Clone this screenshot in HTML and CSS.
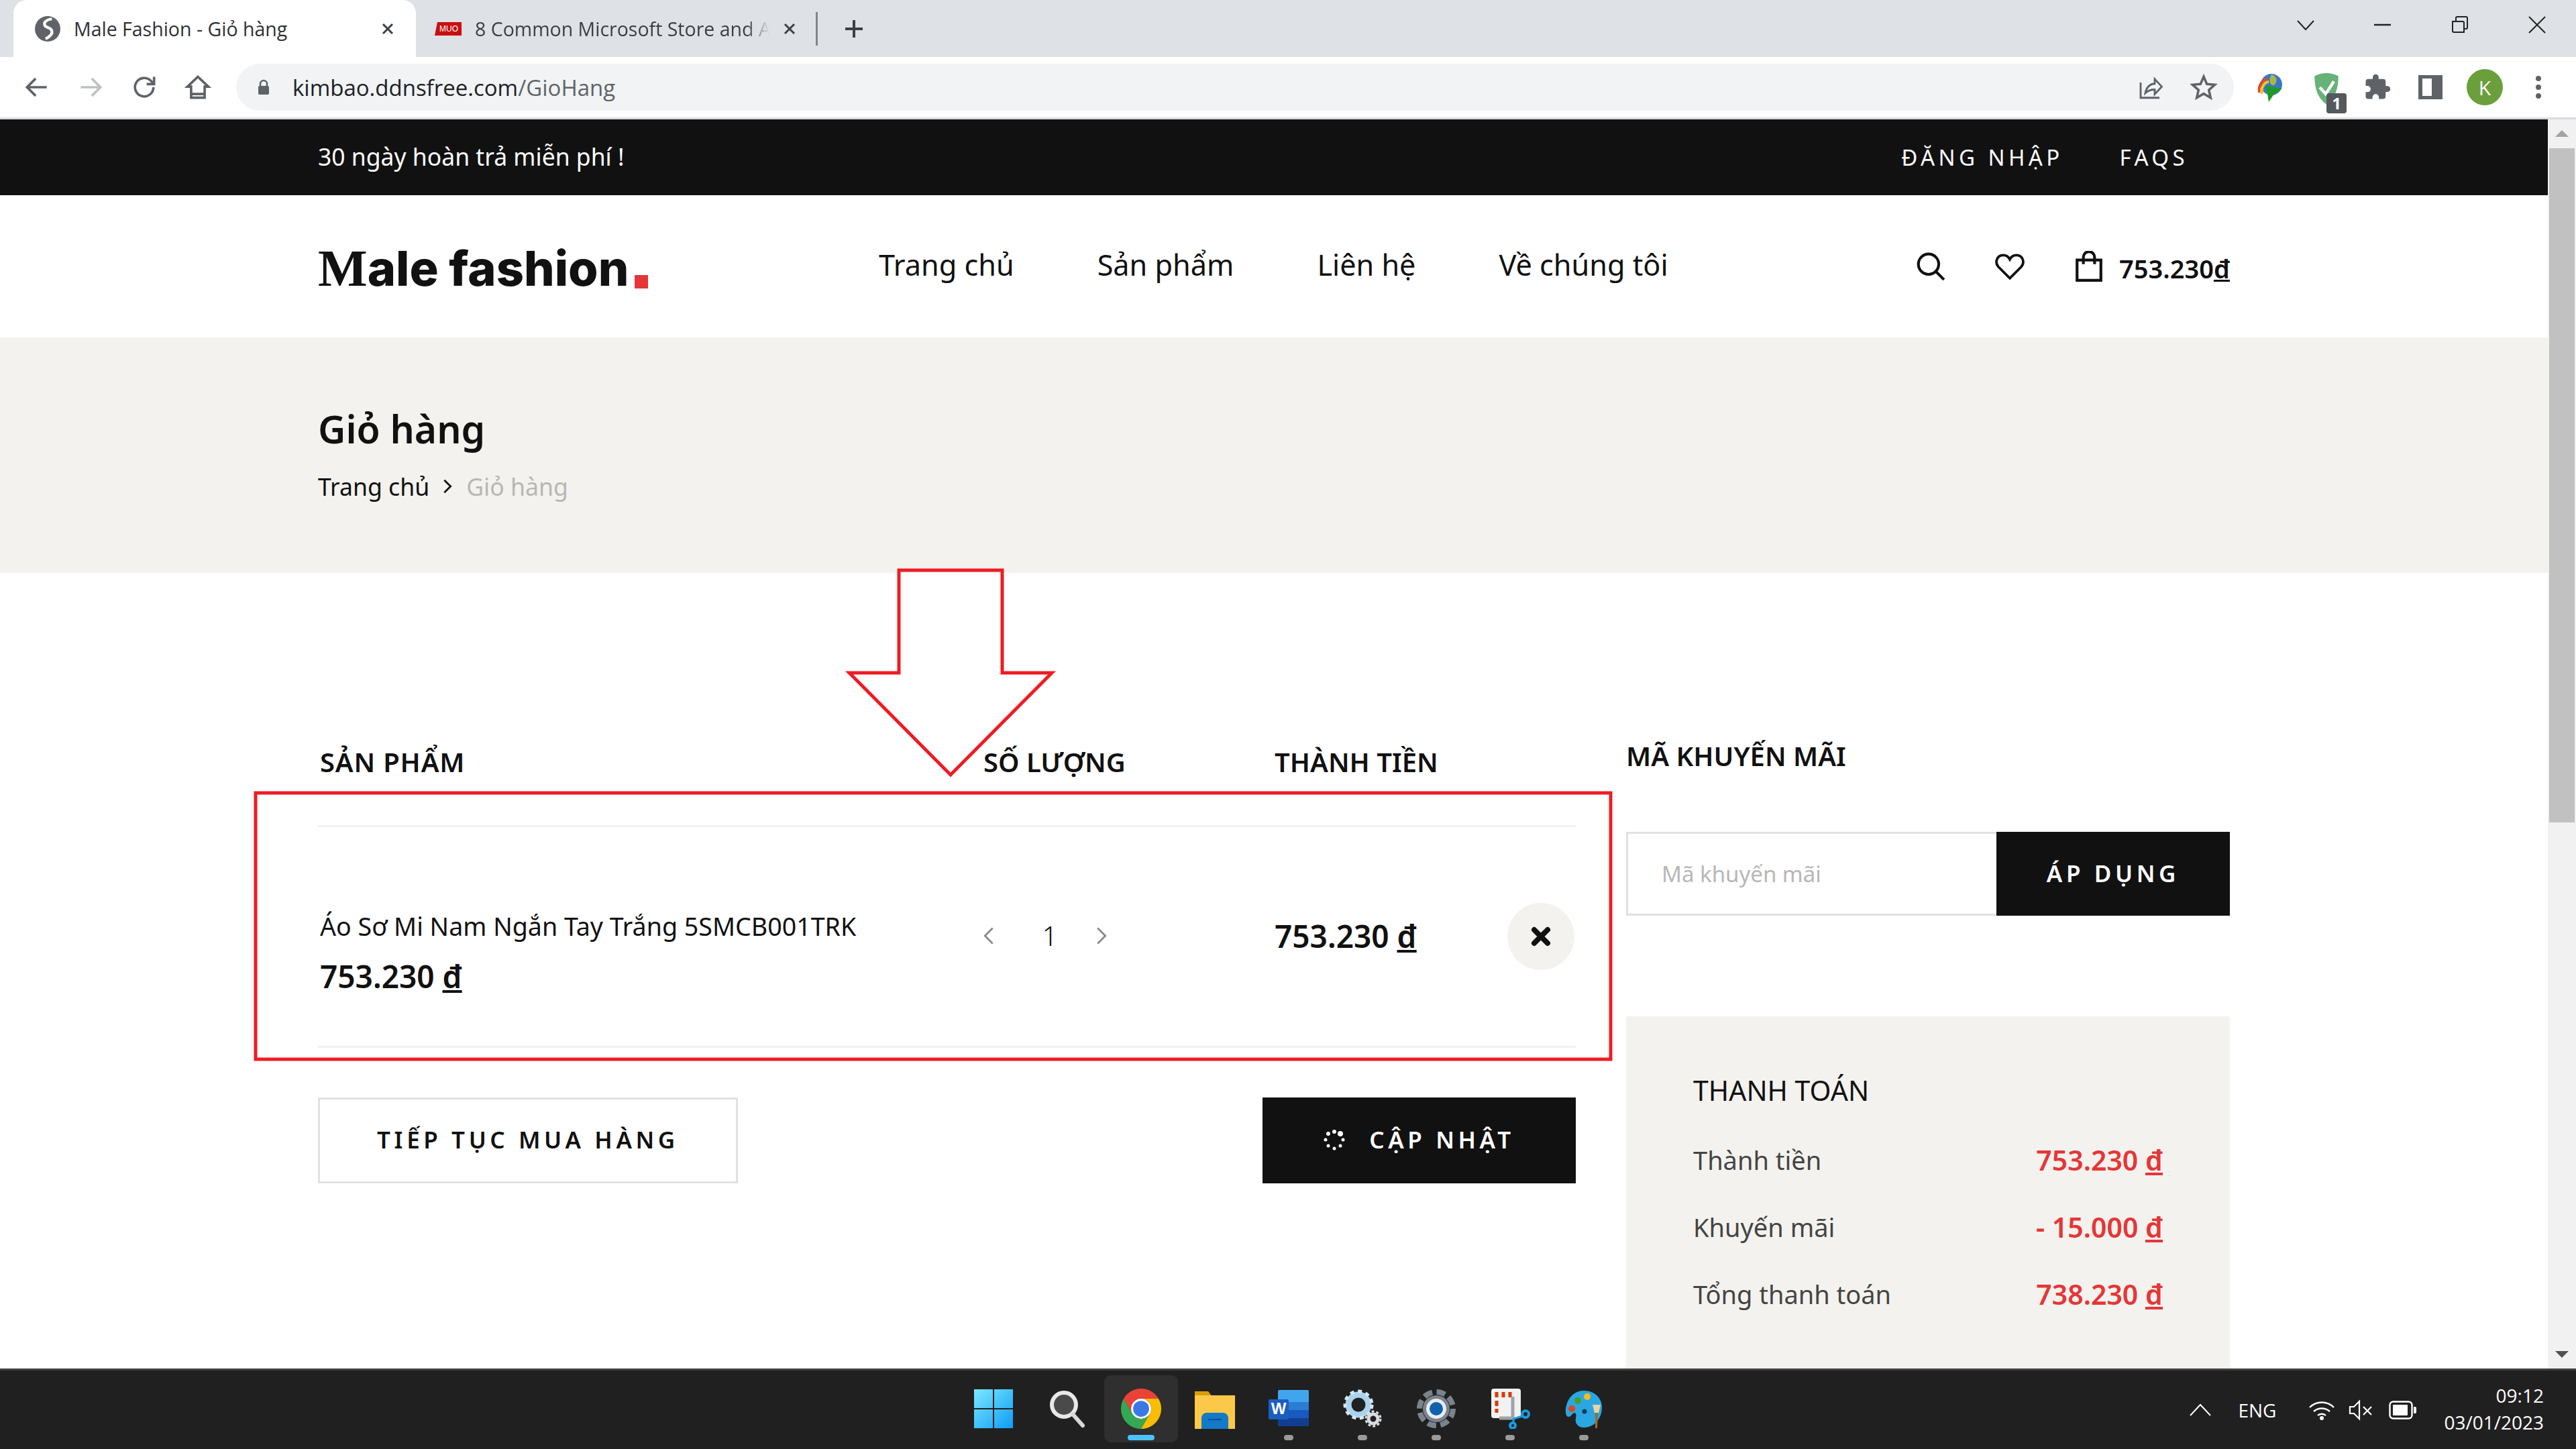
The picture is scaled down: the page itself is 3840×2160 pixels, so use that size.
FILE: index.html
```html
<!DOCTYPE html>
<html lang="vi">
<head>
    <meta charset="UTF-8">
    <title>Male Fashion - Giỏ hàng</title>
    <link rel="stylesheet" href="styles.css">
</head>
<body>
    <!-- Browser tabs -->
    <div class="tabstrip">
        <div class="tab tab-active">
            <svg class="favicon" viewBox="0 0 36 36"><circle cx="18" cy="18" r="18" fill="#5f6368"/><path d="M24 4c-8 1-12 5-10 9 2 4 9 3 10 8 1 4-3 8-9 11" fill="none" stroke="#fff" stroke-width="4"/></svg>
            <span class="tab-title">Male Fashion - Giỏ hàng</span>
            <svg class="tab-close" viewBox="0 0 20 20"><path d="M3 3l14 14M17 3L3 17" stroke="#3c4043" stroke-width="3"/></svg>
        </div>
        <div class="tab">
            <svg class="favicon favicon-muo" viewBox="0 0 40 20"><path d="M4 0h36v20H0z" fill="#c80f0f"/><text x="21" y="14" class="muo-text">MUO</text></svg>
            <span class="tab-title tab-title-fade">8 Common Microsoft Store and A</span>
            <svg class="tab-close" viewBox="0 0 20 20"><path d="M3 3l14 14M17 3L3 17" stroke="#3c4043" stroke-width="3"/></svg>
        </div>
        <span class="tab-sep"></span>
        <svg class="new-tab" viewBox="0 0 30 30"><path d="M15 2v26M2 15h26" stroke="#3c4043" stroke-width="4"/></svg>
        <div class="win-controls">
            <svg viewBox="0 0 26 26" class="win-chevron"><path d="M1 7l12 13L25 7" fill="none" stroke="#222" stroke-width="2"/></svg>
            <svg viewBox="0 0 26 26" class="win-min"><path d="M0 13h25" stroke="#222" stroke-width="2.5"/></svg>
            <svg viewBox="0 0 26 26" class="win-max"><path d="M2 8h15a2 2 0 0 1 2 2v14H4a2 2 0 0 1-2-2zM7 7V3a2 2 0 0 1 2-2h13a2 2 0 0 1 2 2v14a2 2 0 0 1-2 2h-3" fill="none" stroke="#222" stroke-width="2"/></svg>
            <svg viewBox="0 0 26 26" class="win-close"><path d="M1 1l24 24M25 1L1 25" stroke="#222" stroke-width="2"/></svg>
        </div>
    </div>

    <!-- Browser toolbar -->
    <div class="toolbar">
        <div class="nav-btns">
            <svg viewBox="0 0 24 24"><path d="M20 12H4.500M11 5l-7 7 7 7" fill="none" stroke="#5f6368" stroke-width="2"/></svg>
            <svg viewBox="0 0 24 24"><path d="M4 12h15.500M13 5l7 7-7 7" fill="none" stroke="#bdc1c6" stroke-width="2"/></svg>
            <svg viewBox="0 0 24 24"><path d="M19.500 12a7.500 7.500 0 1 1-2.200-5.300L20 9.400M20 3.500v6h-6" fill="none" stroke="#5f6368" stroke-width="2"/></svg>
            <svg viewBox="0 0 24 24"><path d="M12 3.500L3.500 11.500H6.500V20.500H17.500V11.500H20.500zM6.500 17.500h11" fill="none" stroke="#5f6368" stroke-width="2"/></svg>
        </div>
        <div class="omnibox">
            <svg class="lock" viewBox="0 0 20 24"><path d="M5 10V7a5 5 0 0 1 10 0v3" fill="none" stroke="#5f6368" stroke-width="2.500"/><rect x="2" y="10" width="16" height="13" rx="2" fill="#5f6368"/></svg>
            <span class="url">kimbao.ddnsfree.com<span class="url-path">/GioHang</span></span>
            <svg class="omni-icon omni-share" viewBox="0 0 24 24"><path d="M4 8v13h16M8 17c1-6 5-8 8-8V5l6 6.500-6 6.500v-4c-3 0-6 1-8 3z" fill="none" stroke="#5f6368" stroke-width="1.600"/></svg>
            <svg class="omni-icon omni-star" viewBox="0 0 24 24"><path d="M12 3l2.700 6.300 6.800.600-5.100 4.500 1.500 6.600L12 17.500 6.100 21l1.500-6.600-5.100-4.500 6.800-.600z" fill="none" stroke="#5f6368" stroke-width="2"/></svg>
        </div>
        <div class="extensions">
            <svg class="ext-idm" viewBox="0 0 40 44"><circle cx="22" cy="18" r="16" fill="#3b78c4"/><path d="M22 3c8 2 10 10 4 16-6 1-9-7-4-16z" fill="#a8b94a"/><path d="M4 30C2 18 10 10 16 10" fill="none" stroke="#e24a2a" stroke-width="4"/><path d="M8 32C6 22 12 14 18 14" fill="none" stroke="#f2c522" stroke-width="4"/><path d="M14 20l24 4-12 8-8 12z" fill="#1e9b1e"/></svg>
            <div class="ext-guard">
                <svg viewBox="0 0 36 44"><path d="M18 1c7 0 12 2 16 4 0 18-5 30-16 38C7 35 2 23 2 5c4-2 9-4 16-4z" fill="#67b279"/><path d="M9 20l8 9 11-17" fill="none" stroke="#fff" stroke-width="4"/></svg>
                <span class="guard-badge">1</span>
            </div>
            <svg class="ext-puzzle" viewBox="0 0 24 24"><path d="M20.500 11H19V7c0-1.100-.9-2-2-2h-4V3.500C13 2.120 11.880 1 10.500 1S8 2.120 8 3.500V5H4c-1.100 0-1.990.9-1.990 2v3.800H3.500c1.490 0 2.700 1.210 2.700 2.700s-1.210 2.700-2.700 2.700H2V20c0 1.100.9 2 2 2h3.800v-1.500c0-1.490 1.210-2.700 2.700-2.700 1.490 0 2.700 1.210 2.700 2.700V22H17c1.100 0 2-.9 2-2v-4h1.500c1.380 0 2.500-1.120 2.500-2.500S21.880 11 20.500 11z" fill="#5f6368"/></svg>
            <span class="ext-panel"></span>
            <span class="avatar">K</span>
            <svg class="ext-menu" viewBox="0 0 10 36"><circle cx="5" cy="5" r="4" fill="#5f6368"/><circle cx="5" cy="18" r="4" fill="#5f6368"/><circle cx="5" cy="31" r="4" fill="#5f6368"/></svg>
        </div>
    </div>

    <div class="viewport">
        <div class="page">
            <div class="topbar">
                <div class="container topbar-inner">
                    <span class="topbar-note">30 ngày hoàn trả miễn phí !</span>
                    <div class="topbar-links">
                        <a href="#">ĐĂNG NHẬP</a>
                        <a href="#">FAQS</a>
                    </div>
                </div>
            </div>

            <header class="site-header">
                <div class="container site-header-inner">
                    <a href="#" class="logo"><span class="logo-m">M</span>ale fashion<span class="logo-dot"></span></a>
                    <nav class="main-nav">
                        <a href="#">Trang chủ</a>
                        <a href="#">Sản phẩm</a>
                        <a href="#">Liên hệ</a>
                        <a href="#">Về chúng tôi</a>
                    </nav>
                    <div class="header-actions">
                        <svg class="header-icon" viewBox="0 0 44 44"><circle cx="19" cy="19" r="14.500" fill="none" stroke="#111" stroke-width="4"/><path d="M29.500 29.500L41 41" stroke="#111" stroke-width="4"/></svg>
                        <svg class="header-icon" viewBox="0 0 44 44"><path d="M22 39L5.500 22.500C0 16 4 6 12.500 6c4 0 7.500 2 9.500 6 2-4 5.500-6 9.500-6C40 6 44 16 38.500 22.500z" fill="none" stroke="#111" stroke-width="3.600"/></svg>
                        <svg class="header-icon" viewBox="0 0 44 44"><path d="M5 13h34v29H5zM14 19V9a8 8 0 0 1 16 0v10" fill="none" stroke="#111" stroke-width="4"/></svg>
                        <span class="cart-total">753.230<u>đ</u></span>
                    </div>
                </div>
            </header>

            <section class="breadcrumb">
                <div class="container">
                    <h1>Giỏ hàng</h1>
                    <div class="crumbs">
                        <a href="#">Trang chủ</a>
                        <svg viewBox="0 0 12 20"><path d="M2 2l8 8-8 8" fill="none" stroke="#111" stroke-width="2.400"/></svg>
                        <span>Giỏ hàng</span>
                    </div>
                </div>
            </section>

            <section class="container cart">
                <div class="cart-left">
                    <div class="cart-row cart-head">
                        <span class="head-product">SẢN PHẨM</span>
                        <span>SỐ LƯỢNG</span>
                        <span>THÀNH TIỀN</span>
                    </div>
                    <div class="cart-row cart-item">
                        <div class="item-info">
                            <div class="item-name">Áo Sơ Mi Nam Ngắn Tay Trắng 5SMCB001TRK</div>
                            <div class="item-price">753.230 <u>đ</u></div>
                        </div>
                        <div class="qty">
                            <svg viewBox="0 0 14 24"><path d="M12 2L2 12l10 10" fill="none" stroke="#888" stroke-width="2.400"/></svg>
                            <span>1</span>
                            <svg viewBox="0 0 14 24"><path d="M2 2l10 10L2 22" fill="none" stroke="#888" stroke-width="2.400"/></svg>
                        </div>
                        <div class="item-total">753.230 <u>đ</u></div>
                        <div class="remove">
                            <svg viewBox="0 0 32 32"><path d="M6 6l20 20M26 6L6 26" stroke="#111" stroke-width="8" stroke-linecap="round"/></svg>
                        </div>
                    </div>
                    <div class="cart-btns">
                        <a href="#" class="btn btn-outline">TIẾP TỤC MUA HÀNG</a>
                        <a href="#" class="btn btn-dark">
                            <svg viewBox="0 0 32 32" class="spinner"><circle cx="16" cy="4" r="3" fill="#fff"/><circle cx="25" cy="7" r="4" fill="#fff"/><circle cx="29" cy="16" r="2.500" fill="#fff"/><circle cx="25" cy="25" r="2.500" fill="#fff"/><circle cx="16" cy="29" r="2.500" fill="#fff"/><circle cx="7" cy="25" r="2.500" fill="#fff"/><circle cx="3" cy="16" r="2.500" fill="#fff"/><circle cx="7" cy="7" r="3" fill="#fff"/></svg>
                            CẬP NHẬT
                        </a>
                    </div>
                </div>
                <aside class="cart-right">
                    <h2 class="promo-title">MÃ KHUYẾN MÃI</h2>
                    <form class="promo-form">
                        <input type="text" placeholder="Mã khuyến mãi">
                        <button type="button">ÁP DỤNG</button>
                    </form>
                    <div class="summary">
                        <h3>THANH TOÁN</h3>
                        <div class="summary-row"><span>Thành tiền</span><b>753.230 <u>đ</u></b></div>
                        <div class="summary-row"><span>Khuyến mãi</span><b>- 15.000 <u>đ</u></b></div>
                        <div class="summary-row"><span>Tổng thanh toán</span><b>738.230 <u>đ</u></b></div>
                    </div>
                </aside>
            </section>

            <!-- red markup drawn over the screenshot -->
            <svg class="annotation" viewBox="0 0 3798 1862">
                <rect x="381" y="1004" width="2020" height="397" fill="none" stroke="#ed1c24" stroke-width="5"/>
                <path d="M1340 672H1494V825H1568L1417 977L1266 825H1340Z" fill="none" stroke="#ed1c24" stroke-width="5"/>
            </svg>
        </div>
        <div class="scrollbar">
            <span class="arrow-up"></span>
            <span class="thumb"></span>
            <span class="arrow-down"></span>
        </div>
    </div>

    <!-- Windows taskbar -->
    <div class="taskbar">
        <div class="task-icons">
            <div class="task-item">
                <svg viewBox="0 0 60 60"><defs><linearGradient id="win" x1="0" y1="0" x2="1" y2="1"><stop offset="0" stop-color="#7ce8ff"/><stop offset="1" stop-color="#0e9cf5"/></linearGradient></defs><path d="M1 1h28v28H1zM31 1h28v28H31zM1 31h28v28H1zM31 31h28v28H31z" fill="url(#win)"/></svg>
            </div>
            <div class="task-item">
                <svg viewBox="0 0 60 60"><circle cx="25" cy="24" r="18" fill="#4a4a4a" stroke="#e8e8e8" stroke-width="6"/><path d="M38 38l15 17" stroke="#d8d8d8" stroke-width="6" stroke-linecap="round"/></svg>
            </div>
            <div class="task-item task-active">
                <svg viewBox="0 0 48 48"><path d="M3.200 12A24 24 0 0 1 44.800 12H24A12 12 0 0 0 13.600 30z" fill="#ea4335"/><path d="M3.200 12L13.600 30A12 12 0 0 0 34.400 30L24 48A24 24 0 0 1 3.200 12z" fill="#34a853"/><path d="M44.800 12A24 24 0 0 1 24 48L34.400 30A12 12 0 0 0 24 12z" fill="#fbbc04"/><circle cx="24" cy="24" r="12" fill="#fff"/><circle cx="24" cy="24" r="9.500" fill="#3b78e7"/></svg>
                <span class="task-dot task-dot-active"></span>
            </div>
            <div class="task-item">
                <svg viewBox="0 0 60 60"><path d="M0 4h20l6 8h-26z" fill="#d99e06"/><path d="M0 10h60v50H0z" fill="#fcc84a"/><path d="M10 60V44a8 8 0 0 1 8-8h24a8 8 0 0 1 8 8v16z" fill="#1379c9"/><path d="M20 46h20" stroke="#0c4f8a" stroke-width="2"/></svg>
            </div>
            <div class="task-item">
                <svg viewBox="0 0 60 60"><rect x="14" y="2" width="46" height="54" rx="2" fill="#41a5ee"/><rect x="14" y="20" width="46" height="12" fill="#2b7cd3"/><rect x="14" y="32" width="46" height="12" fill="#185abd"/><rect x="14" y="44" width="46" height="12" fill="#103f91"/><rect x="0" y="16" width="30" height="30" rx="2" fill="#1a5ec0"/><text x="15" y="38" class="word-w">W</text></svg>
                <span class="task-dot"></span>
            </div>
            <div class="task-item">
                <svg viewBox="0 0 60 60"><circle cx="24" cy="24" r="15" fill="none" stroke="#a9d3ee" stroke-width="9"/><circle cx="24" cy="24" r="20" fill="none" stroke="#d9e6ef" stroke-width="5" stroke-dasharray="6 5.600"/><circle cx="46" cy="45" r="7" fill="none" stroke="#d8dde2" stroke-width="5"/><circle cx="46" cy="45" r="11" fill="none" stroke="#d8dde2" stroke-width="3" stroke-dasharray="4 3"/></svg>
                <span class="task-dot"></span>
            </div>
            <div class="task-item">
                <svg viewBox="0 0 60 60"><circle cx="30" cy="30" r="20" fill="#7b838c"/><circle cx="30" cy="30" r="25" fill="none" stroke="#7b838c" stroke-width="8" stroke-dasharray="13 6.600"/><circle cx="30" cy="30" r="15" fill="#e9ecef"/><circle cx="30" cy="30" r="10" fill="#0f62ad"/></svg>
                <span class="task-dot"></span>
            </div>
            <div class="task-item">
                <svg viewBox="0 0 60 60"><rect x="2" y="0" width="44" height="44" rx="4" fill="#f1f1f1"/><path d="M10 5v8M20 5v8M30 5v8M10 18v8M10 30v6" stroke="#d83b01" stroke-width="5"/><path d="M34 12v32H14" fill="none" stroke="#9ea3a8" stroke-width="5"/><circle cx="53" cy="38" r="5" fill="none" stroke="#1a9be0" stroke-width="4"/><circle cx="34" cy="55" r="4" fill="none" stroke="#1a9be0" stroke-width="4"/><path d="M48 41L35 45v6" fill="none" stroke="#1a9be0" stroke-width="3"/></svg>
                <span class="task-dot"></span>
            </div>
            <div class="task-item">
                <svg viewBox="0 0 60 60"><path d="M30 3C12 3 2 20 3 36c1 8 6 7 9 3 4-5 8-3 6 5-2 8 4 14 12 14 16 0 27-14 27-30C57 14 46 3 30 3z" fill="#2aa7e2"/><circle cx="12" cy="30" r="5" fill="#d9481c"/><circle cx="21" cy="18" r="5" fill="#4e9a26"/><circle cx="35" cy="12" r="5" fill="#f3bc1f"/><circle cx="31" cy="34" r="3.500" fill="#0c3a5e"/><path d="M43 24h12l-3 12h-6z" fill="#e9d3a3"/><path d="M47 36h4l-1 23h-3z" fill="#9a6a2a"/></svg>
                <span class="task-dot"></span>
            </div>
        </div>
        <div class="tray">
            <svg class="tray-caret" viewBox="0 0 32 20"><path d="M1 18L16 2l15 16" fill="none" stroke="#fff" stroke-width="2"/></svg>
            <span class="tray-lang">ENG</span>
            <svg class="tray-wifi" viewBox="0 0 40 32"><path d="M2 12C12 2 28 2 38 12M8 18c7-6 17-6 24 0M14 24c3-3 9-3 12 0" fill="none" stroke="#fff" stroke-width="2.400"/><circle cx="20" cy="28" r="3" fill="#fff"/></svg>
            <svg class="tray-sound" viewBox="0 0 38 32"><path d="M2 11h6l8-8v26l-8-8H2zM22 11l12 12M34 11L22 23" fill="none" stroke="#fff" stroke-width="2.200"/></svg>
            <svg class="tray-battery" viewBox="0 0 42 32"><rect x="1.500" y="3.500" width="33" height="25" rx="5" fill="none" stroke="#fff" stroke-width="2.400"/><rect x="6" y="8" width="22" height="16" rx="1" fill="#fff"/><path d="M37 11h2a2 2 0 0 1 2 2v6a2 2 0 0 1-2 2h-2z" fill="#fff"/></svg>
            <div class="tray-clock">
                <div>09:12</div>
                <div>03/01/2023</div>
            </div>
        </div>
    </div>
</body>
</html>
```

FILE: styles.css
```css
/* Colors */
:root {
    --dark: #111111;
    --sand: #f3f2ee;
    --red: #e53637;
    --grey: #b7b7b7;
    --chrome-bg: #dee1e6;
    --site-font: "Noto Sans", "Open Sans", sans-serif;
    --ui-font: "Open Sans", "Noto Sans", sans-serif;
}

* {
    box-sizing: border-box;
}

html, body {
    height: 100%;
}

body {
    margin: 0;
    display: flex;
    flex-direction: column;
    overflow: hidden;
    font-family: var(--site-font);
    color: var(--dark);
    background: #fff;
}

a {
    color: inherit;
    text-decoration: none;
}

svg {
    display: block;
    flex: none;
}

/* Browser tabs */
.tabstrip {
    height: 85px;
    flex: none;
    display: flex;
    align-items: center;
    padding-left: 20px;
    background: var(--chrome-bg);
    font-family: var(--ui-font);
}

.tab {
    width: 600px;
    height: 85px;
    flex: none;
    display: flex;
    align-items: center;
    padding: 0 32px;
    gap: 20px;
    color: #3c4043;
    font-size: 28.5px;
}

.tab-active {
    background: #fff;
    border-radius: 20px 20px 0 0;
    color: #303134;
}

.tab + .tab {
    width: 596px;
    padding-left: 28px;
    padding-right: 29px;
}

.favicon {
    width: 38px;
    height: 38px;
}

.favicon-muo {
    width: 40px;
    height: 20px;
}

.muo-text {
    fill: #fff;
    font-size: 12px;
    font-family: "Liberation Sans", sans-serif;
    text-anchor: middle;
}

.tab-title {
    flex: 1;
    min-width: 0;
    white-space: nowrap;
}

.tab-title-fade {
    -webkit-mask-image: linear-gradient(to right, #000 92%, transparent 100%);
    mask-image: linear-gradient(to right, #000 92%, transparent 100%);
}

.tab-close {
    width: 20px;
    height: 20px;
}

.tab-sep {
    width: 3px;
    height: 50px;
    background: #80868b;
}

.new-tab {
    width: 30px;
    height: 30px;
    margin-left: 39px;
}

.win-controls {
    margin-left: auto;
    display: flex;
    align-items: center;
    height: 100%;
    padding-right: 45px;
    padding-bottom: 12px;
}

.win-controls svg {
    width: 26px;
    height: 26px;
}

.win-controls svg + svg {
    margin-left: 89px;
}

/* Browser toolbar */
.toolbar {
    height: 93px;
    flex: none;
    display: flex;
    align-items: center;
    background: #fff;
    border-bottom: 3px solid #dadce0;
    font-family: var(--ui-font);
}

.nav-btns {
    width: 352px;
    flex: none;
    display: flex;
    gap: 36px;
    padding-left: 33px;
}

.nav-btns svg {
    width: 44px;
    height: 44px;
}

.omnibox {
    width: 2978px;
    height: 70px;
    flex: none;
    display: flex;
    align-items: center;
    padding: 0 24px 0 31px;
    background: #f1f3f4;
    border-radius: 35px;
    font-size: 33px;
}

.lock {
    width: 20px;
    height: 26px;
    margin-right: 33px;
}

.url {
    color: #202124;
    flex: 1;
}

.url-path {
    color: #5f6368;
}

.omni-icon {
    width: 42px;
    height: 42px;
}

.omni-star {
    margin-left: 38px;
}

.extensions {
    display: flex;
    align-items: center;
    padding-left: 34px;
}

.ext-idm {
    width: 40px;
    height: 44px;
}

.ext-guard {
    position: relative;
    width: 40px;
    height: 44px;
    margin-left: 44px;
}

.guard-badge {
    position: absolute;
    right: -10px;
    bottom: -17px;
    width: 30px;
    height: 30px;
    background: #55595e;
    border-radius: 4px;
    color: #fff;
    font-size: 24px;
    font-weight: 700;
    line-height: 30px;
    text-align: center;
}

.ext-puzzle {
    width: 42px;
    height: 42px;
    margin-left: 35px;
}

.ext-panel {
    width: 36px;
    height: 36px;
    margin-left: 40px;
    border: solid #5f6368;
    border-width: 5px 16px 5px 6px;
}

.avatar {
    width: 54px;
    height: 54px;
    margin-left: 36px;
    display: flex;
    align-items: center;
    justify-content: center;
    background: #6a9f3c;
    border-radius: 50%;
    color: #fff;
    font-size: 30px;
}

.ext-menu {
    width: 10px;
    height: 36px;
    margin-left: 48px;
}

/* Page area */
.viewport {
    flex: 1;
    min-height: 0;
    display: flex;
}

.page {
    position: relative;
    flex: 1;
    min-width: 0;
    overflow: hidden;
}

.container {
    width: 2850px;
    margin: 0 auto;
}

.annotation {
    position: absolute;
    top: 0;
    left: 0;
    width: 3798px;
    height: 1862px;
}

.scrollbar {
    width: 42px;
    flex: none;
    display: flex;
    flex-direction: column;
    align-items: center;
    background: #f1f1f1;
}

.thumb {
    width: 38px;
    height: 1005px;
    margin-top: 17px;
    background: #c1c1c1;
}

.arrow-up, .arrow-down {
    width: 0;
    height: 0;
    border-left: 10px solid transparent;
    border-right: 10px solid transparent;
}

.arrow-up {
    margin-top: 16px;
    border-bottom: 10px solid #a3a3a3;
}

.arrow-down {
    margin-top: auto;
    margin-bottom: 16px;
    border-top: 10px solid #505050;
}

/* Top bar */
.topbar {
    height: 113px;
    background: var(--dark);
    color: #fff;
}

.topbar-inner {
    height: 100%;
    display: flex;
    align-items: center;
    justify-content: space-between;
}

.topbar-note {
    font-size: 35.5px;
    margin-top: -3px;
}

.topbar-links {
    display: flex;
    gap: 84px;
    padding-right: 62px;
    font-size: 33px;
    letter-spacing: 5.4px;
}

/* Site header */
.site-header {
    height: 212px;
}

.site-header-inner {
    height: 100%;
    display: flex;
    align-items: center;
}

.logo {
    width: 836px;
    flex: none;
    display: flex;
    align-items: flex-end;
    height: 60px;
    margin-top: 5px;
    font-family: "Inter", sans-serif;
    font-size: 72px;
    font-weight: 800;
    line-height: 60px;
}

.logo-m {
    font-family: "Liberation Serif", serif;
    font-size: 78px;
    font-weight: 700;
    line-height: 60px;
}

.logo-dot {
    width: 20px;
    height: 20px;
    margin-left: 9px;
    background: var(--red);
}

.main-nav {
    display: flex;
    gap: 124px;
    font-size: 43.2px;
    margin-top: -6px;
}

.header-actions {
    margin-left: auto;
    display: flex;
    align-items: center;
}

.header-icon {
    width: 46px;
    height: 46px;
}

.header-icon + .header-icon {
    margin-left: 72px;
}

.cart-total {
    margin: 5px 0 0 22px;
    font-size: 38px;
    font-weight: 600;
}

/* Breadcrumb */
.breadcrumb {
    height: 351px;
    padding-top: 100px;
    background: var(--sand);
}

.breadcrumb h1 {
    margin: 0 0 24px;
    font-size: 57px;
    font-weight: 600;
    line-height: 72px;
}

.crumbs {
    display: flex;
    align-items: center;
    font-size: 35.6px;
    line-height: 52px;
}

.crumbs svg {
    width: 14px;
    height: 24px;
    margin: 0 21px 0 20px;
}

.crumbs span {
    color: var(--grey);
}

/* Cart */
.cart {
    display: grid;
    grid-template-columns: 1875px 900px;
    column-gap: 75px;
    padding-top: 250px;
}

.cart-row {
    display: grid;
    grid-template-columns: 992px 434px 347px 102px;
    align-items: center;
}

.cart-head {
    height: 62px;
    margin-bottom: 64px;
    font-size: 40px;
    font-weight: 600;
}

.head-product {
    padding-left: 3px;
    letter-spacing: 0.8px;
}

.cart-item {
    height: 332px;
    border-top: 3px solid #f2f2f2;
    border-bottom: 3px solid #f2f2f2;
}

.item-info {
    margin-top: 49px;
    padding-left: 3px;
}

.item-name {
    font-size: 37.6px;
    line-height: 50px;
    margin-bottom: 19px;
}

.item-price, .item-total {
    font-size: 46px;
    font-weight: 600;
    line-height: 60px;
}

.item-total {
    margin-top: -3px;
}

.qty {
    display: flex;
    align-items: center;
    margin-top: -3px;
}

.qty svg {
    width: 16px;
    height: 28px;
}

.qty span {
    width: 152px;
    padding-left: 14px;
    text-align: center;
    font-size: 40px;
    font-weight: 300;
}

.remove {
    width: 100px;
    height: 100px;
    display: flex;
    align-items: center;
    justify-content: center;
    background: var(--sand);
    border-radius: 50%;
}

.remove svg {
    width: 32px;
    height: 32px;
}

.cart-btns {
    display: flex;
    justify-content: space-between;
    margin-top: 74px;
}

.btn {
    height: 128px;
    display: flex;
    align-items: center;
    justify-content: center;
    padding-bottom: 3px;
    font-size: 35px;
    font-weight: 600;
    letter-spacing: 5.6px;
}

.btn-outline {
    width: 626px;
    border: 3px solid #e1e1e1;
}

.btn-dark {
    width: 467px;
    background: var(--dark);
    color: #fff;
}

.spinner {
    width: 32px;
    height: 32px;
    margin-right: 36px;
}

/* Promo and summary */
.promo-title {
    margin: 0;
    height: 46px;
    font-size: 40px;
    font-weight: 600;
    line-height: 46px;
}

.promo-form {
    display: flex;
    margin-top: 90px;
}

.promo-form input {
    width: 552px;
    height: 125px;
    padding: 0 50px;
    border: 3px solid #e1e1e1;
    border-right: 0;
    outline: none;
    font-family: var(--site-font);
    font-size: 33px;
}

.promo-form input::placeholder {
    color: var(--grey);
}

.promo-form button {
    width: 348px;
    height: 125px;
    padding: 0 0 3px;
    border: 0;
    background: var(--dark);
    color: #fff;
    font-family: var(--site-font);
    font-size: 35px;
    font-weight: 600;
    letter-spacing: 5.6px;
}

.summary {
    margin-top: 150px;
    height: 600px;
    padding: 85px 100px 0;
    background: var(--sand);
}

.summary h3 {
    margin: 0 0 30px;
    font-size: 41px;
    font-weight: 400;
    line-height: 50px;
}

.summary-row {
    height: 100px;
    display: flex;
    align-items: center;
    justify-content: space-between;
    margin-top: -1px;
    margin-bottom: 1px;
    font-size: 38px;
    color: #444;
}

.summary-row b {
    color: var(--red);
    font-size: 41px;
    font-weight: 600;
}

/* Windows taskbar */
.taskbar {
    height: 120px;
    flex: none;
    display: grid;
    grid-template-columns: 1fr auto 1fr;
    border-top: 3px solid #3f3f3f;
    background: #202020;
    color: #fff;
    font-family: var(--ui-font);
}

.task-icons {
    grid-column: 2;
    display: flex;
    margin-left: 2px;
}

.task-item {
    position: relative;
    width: 110px;
    height: 100px;
    margin-top: 7px;
    display: flex;
    align-items: center;
    justify-content: center;
    border-radius: 10px;
}

.task-item svg {
    width: 60px;
    height: 60px;
}

.task-active {
    background: #2f2f2f;
}

.task-dot {
    position: absolute;
    bottom: 3px;
    left: 50%;
    width: 14px;
    height: 8px;
    margin-left: -7px;
    background: #9a9a9a;
    border-radius: 4px;
}

.task-dot-active {
    width: 40px;
    margin-left: -20px;
    background: #4cc2ff;
}

.word-w {
    fill: #fff;
    font-family: "Liberation Sans", sans-serif;
    font-size: 24px;
    font-weight: 700;
    text-anchor: middle;
}

.tray {
    grid-column: 3;
    justify-self: end;
    display: flex;
    align-items: center;
    padding-right: 48px;
    font-size: 28px;
}

.tray-caret {
    width: 32px;
    height: 20px;
}

.tray-lang {
    margin-left: 40px;
}

.tray-wifi {
    width: 40px;
    height: 32px;
    margin-left: 48px;
}

.tray-sound {
    width: 38px;
    height: 32px;
    margin-left: 20px;
}

.tray-battery {
    width: 42px;
    height: 32px;
    margin-left: 22px;
}

.tray-clock {
    margin: 0 0 3px 40px;
    text-align: right;
    line-height: 40px;
}
```
